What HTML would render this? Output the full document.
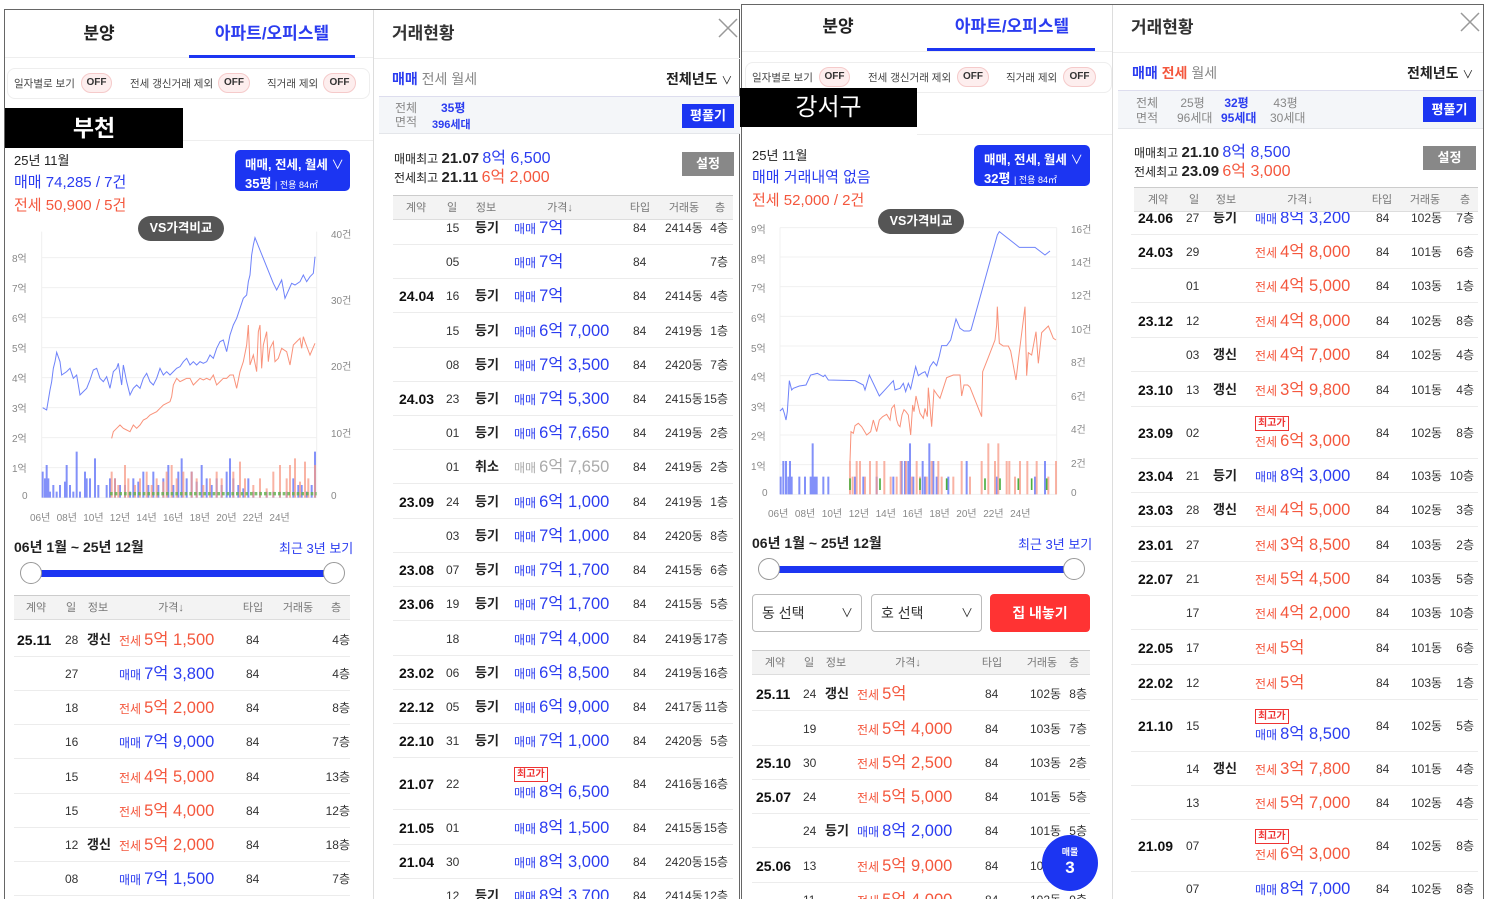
<!DOCTYPE html>
<html style="overflow:hidden"><head><meta charset="utf-8"><style>
*{margin:0;padding:0;box-sizing:border-box}
html,body{width:1488px;height:899px;overflow:hidden}
body{background:#fff;font-family:"Liberation Sans","Noto Sans CJK KR",sans-serif;color:#222;position:relative}
.a{position:absolute;white-space:nowrap}
.tab{font-size:17px;font-weight:bold;transform:translateX(-50%)}
.blue{color:#2b3cf0}.red{color:#f4573d}.gray{color:#888}
.pill{position:absolute;height:20px;border-radius:10px;background:#fdeeee;border:1px solid #f5caca;font-size:10px;color:#333;text-align:center;line-height:18px;font-weight:bold}
.ft{font-size:10.5px;color:#444}
.bb{position:absolute;background:#000;color:#fff;font-size:23px;font-weight:bold;text-align:center}
.btn{position:absolute;background:#1c35f2;border-radius:5px;color:#fff;font-weight:bold}
.vs{position:absolute;background:#555;color:#fff;border-radius:13px;font-size:12.5px;text-align:center;line-height:25px;font-weight:bold;z-index:3}
.ax{position:absolute;font-size:10px;color:#888;white-space:nowrap}
.hd{position:absolute;height:25px;background:#f3f3f3;border-top:1px solid #ccc;border-bottom:1px solid #ddd;z-index:2}
.hd span{position:absolute;top:0;line-height:24px;font-size:11px;color:#777;transform:translateX(-50%)}
.tb{position:absolute}
.r{position:absolute;left:0;right:0;height:34px;border-bottom:1px solid #ececec}
.r span{position:absolute;top:0;line-height:34px;white-space:nowrap}
.d{font-weight:bold;font-size:14px;color:#111}
.dy{font-size:12px;color:#333}
.inf{font-weight:bold;font-size:13px;color:#222}
.p{font-size:16.5px}
.p small{font-size:12px;margin-right:3px}
.pb{color:#2b3cf0}.pr{color:#f4573d}.pg{color:#aaa}
.ty{font-size:12px;color:#333}
.dn{font-size:12px;color:#333}
.fl{font-size:12px;color:#333;right:0}
.r.tall{height:52px}
.r.tall span{line-height:52px}
.r.tall span.p{line-height:18px;top:25px}
.r span.badge,.r.tall span.badge{top:9px;font-size:10px;font-weight:bold;color:#e33;border:1px solid #e33;padding:0 2px;line-height:13px;background:#fff}
.t1 .d{left:3px}.t1 .dy{left:51px}.t1 .inf{left:73px}.t1 .p,.t1 .badge{left:105px}.t1 .ty{left:232px}.t1 .dn{left:270px}
.t2 .d{left:6px}.t2 .dy{left:53px}.t2 .inf{left:82px}.t2 .p,.t2 .badge{left:121px}.t2 .ty{left:240px}.t2 .dn{left:272px}.t2 .fl{right:5px}
.t3 .d{left:4px}.t3 .dy{left:51px}.t3 .inf{left:73px}.t3 .p,.t3 .badge{left:105px}.t3 .ty{left:233px}.t3 .dn{left:278px}.t3 .fl{right:3px}
.t4 .d{left:7px}.t4 .dy{left:55px}.t4 .inf{left:82px}.t4 .p,.t4 .badge{left:124px}.t4 .ty{left:245px}.t4 .dn{left:280px}.t4 .fl{right:4px}
.sel{position:absolute;border:1px solid #bbb;border-radius:4px;font-size:14px;padding-left:9px;line-height:36px;color:#333}
</style></head><body>

<div class="a" style="left:4px;top:9px;width:736px;height:890px;border:1px solid #666;border-bottom:none"></div>
<div class="a" style="left:373px;top:10px;width:1px;height:889px;background:#ddd"></div>
<div class="a" style="left:741px;top:4px;width:743px;height:895px;border:1px solid #666;border-bottom:none"></div>
<div class="a" style="left:1112px;top:5px;width:1px;height:894px;background:#ddd"></div>

<!-- PANEL 1 -->
<div class="a tab" style="left:99px;top:19px">분양</div>
<div class="a tab blue" style="left:272px;top:19px;font-weight:600">아파트/오피스텔</div>
<div class="a" style="left:5px;top:57px;width:368px;height:1px;background:#eee"></div>
<div class="a" style="left:189px;top:55px;width:166px;height:3px;background:#1c35f2"></div>
<div class="a" style="left:7px;top:68px;width:363px;height:31px;border:1px solid #eee;border-radius:8px"></div>
<div class="a ft" style="left:14px;top:76px">일자별로 보기</div><div class="pill" style="left:81px;top:73px;width:31px">OFF</div>
<div class="a ft" style="left:130px;top:76px">전세 갱신거래 제외</div><div class="pill" style="left:218px;top:73px;width:32px">OFF</div>
<div class="a ft" style="left:267px;top:76px">직거래 제외</div><div class="pill" style="left:323px;top:73px;width:33px">OFF</div>
<div class="bb" style="left:5px;top:108px;width:178px;height:40px;line-height:40px">부천</div>
<div class="a" style="left:183px;top:140px;width:190px;height:1px;background:#eee"></div>
<div class="a" style="left:14px;top:150px;font-size:13px">25년 11월</div>
<div class="a blue" style="left:14px;top:171px;font-size:15px">매매 74,285 / 7건</div>
<div class="a red" style="left:14px;top:194px;font-size:15px">전세 50,900 / 5건</div>
<div class="btn" style="left:235px;top:150px;width:115px;height:41px"><div class="a" style="left:10px;top:4px;font-size:12.5px">매매, 전세, 월세 <span style="font-weight:normal">∨</span></div><div class="a" style="left:10px;top:23px;font-size:13px">35평 <span style="font-size:9px;font-weight:normal">| 전용 84㎡</span></div></div>
<div class="vs" style="left:138px;top:216px;width:86px;height:25px">VS가격비교</div>
<div class="ax" style="left:12px;top:250px">8억</div><div class="ax" style="left:12px;top:280px">7억</div><div class="ax" style="left:12px;top:310px">6억</div><div class="ax" style="left:12px;top:340px">5억</div><div class="ax" style="left:12px;top:370px">4억</div><div class="ax" style="left:12px;top:400px">3억</div><div class="ax" style="left:12px;top:430px">2억</div><div class="ax" style="left:12px;top:460px">1억</div><div class="ax" style="left:22px;top:491px">0</div>
<div class="ax" style="left:331px;top:226px">40건</div><div class="ax" style="left:331px;top:292px">30건</div><div class="ax" style="left:331px;top:358px">20건</div><div class="ax" style="left:331px;top:425px">10건</div><div class="ax" style="left:331px;top:491px">0</div>
<div class="ax" style="left:30px;top:509px;word-spacing:3.5px">06년 08년 10년 12년 14년 16년 18년 20년 22년 24년</div>
<div class="a" style="left:14px;top:537px;font-size:14px;font-weight:bold">06년 1월 ~ 25년 12월</div>
<div class="a blue" style="left:279px;top:538px;font-size:13px">최근 3년 보기</div>
<div class="a" style="left:30px;top:570px;width:304px;height:7px;background:#1c35f2"></div>
<div class="a" style="left:20px;top:562px;width:22px;height:22px;border-radius:50%;background:#fff;border:1px solid #999"></div>
<div class="a" style="left:323px;top:562px;width:22px;height:22px;border-radius:50%;background:#fff;border:1px solid #999"></div>
<div class="hd" style="left:14px;top:595px;width:336px"><span style="left:22px">계약</span><span style="left:57px">일</span><span style="left:84px">정보</span><span style="left:157px">가격↓</span><span style="left:239px">타입</span><span style="left:284px">거래동</span><span style="left:322px">층</span></div>
<div class="a" style="left:14px;top:620px;width:336px;height:279px;overflow:hidden">
<div class="tb t1" style="left:0;top:-620px;width:336px;height:1000px">
<div class="r" style="top:623px"><span class="d">25.11</span><span class="dy">28</span><span class="inf">갱신</span><span class="p pr"><small>전세</small>5억 1,500</span><span class="ty">84</span><span class="fl">4층</span></div>
<div class="r" style="top:657px"><span class="dy">27</span><span class="p pb"><small>매매</small>7억 3,800</span><span class="ty">84</span><span class="fl">4층</span></div>
<div class="r" style="top:691px"><span class="dy">18</span><span class="p pr"><small>전세</small>5억 2,000</span><span class="ty">84</span><span class="fl">8층</span></div>
<div class="r" style="top:725px"><span class="dy">16</span><span class="p pb"><small>매매</small>7억 9,000</span><span class="ty">84</span><span class="fl">7층</span></div>
<div class="r" style="top:760px"><span class="dy">15</span><span class="p pr"><small>전세</small>4억 5,000</span><span class="ty">84</span><span class="fl">13층</span></div>
<div class="r" style="top:794px"><span class="dy">15</span><span class="p pr"><small>전세</small>5억 4,000</span><span class="ty">84</span><span class="fl">12층</span></div>
<div class="r" style="top:828px"><span class="dy">12</span><span class="inf">갱신</span><span class="p pr"><small>전세</small>5억 2,000</span><span class="ty">84</span><span class="fl">18층</span></div>
<div class="r" style="top:862px"><span class="dy">08</span><span class="p pb"><small>매매</small>7억 1,500</span><span class="ty">84</span><span class="fl">7층</span></div>
</div></div>

<!-- PANEL 2 -->
<div class="a" style="left:392px;top:19px;font-size:17px;font-weight:bold;color:#333">거래현황</div>
<div class="a" style="left:718px;top:18px;width:20px;height:20px"><svg width="20" height="20"><path d="M1 1L19 19M19 1L1 19" stroke="#999" stroke-width="1.5"/></svg></div>
<div class="a" style="left:374px;top:58px;width:366px;height:1px;background:#eee"></div>
<div class="a" style="left:392px;top:69px;font-size:14px"><span class="blue" style="font-weight:bold">매매</span> <span class="gray">전세</span> <span class="gray">월세</span></div>
<div class="a" style="left:666px;top:69px;font-size:14px;font-weight:bold">전체년도 <span style="font-weight:normal;font-size:11px">∨</span></div>
<div class="a" style="left:379px;top:96px;width:361px;height:38px;background:#f4f6f9;border-top:1px solid #dde;border-bottom:1px solid #e4e6ea"></div>
<div class="a gray" style="left:395px;top:101px;font-size:12px;line-height:14px">전체<br>면적</div>
<div class="a blue" style="left:441px;top:101px;font-size:12px;line-height:14px;font-weight:bold">35평</div>
<div class="a blue" style="left:432px;top:116px;font-size:11px;font-weight:bold">396세대</div>
<div class="a" style="left:682px;top:104px;width:52px;height:24px;background:#1c35f2;color:#fff;font-size:13px;font-weight:bold;text-align:center;line-height:24px">평풀기</div>
<div class="a" style="left:394px;top:144px;font-size:12px">매매최고 <b style="font-size:15px">21.07</b> <span class="blue" style="font-size:16px">8억 6,500</span></div>
<div class="a" style="left:394px;top:163px;font-size:12px">전세최고 <b style="font-size:15px">21.11</b> <span class="red" style="font-size:16px">6억 2,000</span></div>
<div class="a" style="left:682px;top:152px;width:52px;height:24px;background:#888;color:#fff;font-size:13px;font-weight:bold;text-align:center;line-height:24px">설정</div>
<div class="hd" style="left:393px;top:195px;width:340px"><span style="left:23px">계약</span><span style="left:59px">일</span><span style="left:93px">정보</span><span style="left:167px">가격↓</span><span style="left:247px">타입</span><span style="left:291px">거래동</span><span style="left:327px">층</span></div>
<div class="a" style="left:380px;top:220px;width:360px;height:679px;overflow:hidden">
<div class="tb t2" style="left:13px;top:-220px;width:340px;height:1200px">
<div class="r" style="top:211px"><span class="dy">15</span><span class="inf">등기</span><span class="p pb"><small>매매</small>7억</span><span class="ty">84</span><span class="dn">2414동</span><span class="fl">4층</span></div>
<div class="r" style="top:245px"><span class="dy">05</span><span class="p pb"><small>매매</small>7억</span><span class="ty">84</span><span class="fl">7층</span></div>
<div class="r" style="top:279px"><span class="d">24.04</span><span class="dy">16</span><span class="inf">등기</span><span class="p pb"><small>매매</small>7억</span><span class="ty">84</span><span class="dn">2414동</span><span class="fl">4층</span></div>
<div class="r" style="top:314px"><span class="dy">15</span><span class="inf">등기</span><span class="p pb"><small>매매</small>6억 7,000</span><span class="ty">84</span><span class="dn">2419동</span><span class="fl">1층</span></div>
<div class="r" style="top:348px"><span class="dy">08</span><span class="inf">등기</span><span class="p pb"><small>매매</small>7억 3,500</span><span class="ty">84</span><span class="dn">2420동</span><span class="fl">7층</span></div>
<div class="r" style="top:382px"><span class="d">24.03</span><span class="dy">23</span><span class="inf">등기</span><span class="p pb"><small>매매</small>7억 5,300</span><span class="ty">84</span><span class="dn">2415동</span><span class="fl">15층</span></div>
<div class="r" style="top:416px"><span class="dy">01</span><span class="inf">등기</span><span class="p pb"><small>매매</small>6억 7,650</span><span class="ty">84</span><span class="dn">2419동</span><span class="fl">2층</span></div>
<div class="r" style="top:450px"><span class="dy">01</span><span class="inf">취소</span><span class="p pg"><small>매매</small>6억 7,650</span><span class="ty">84</span><span class="dn">2419동</span><span class="fl">2층</span></div>
<div class="r" style="top:485px"><span class="d">23.09</span><span class="dy">24</span><span class="inf">등기</span><span class="p pb"><small>매매</small>6억 1,000</span><span class="ty">84</span><span class="dn">2419동</span><span class="fl">1층</span></div>
<div class="r" style="top:519px"><span class="dy">03</span><span class="inf">등기</span><span class="p pb"><small>매매</small>7억 1,000</span><span class="ty">84</span><span class="dn">2420동</span><span class="fl">8층</span></div>
<div class="r" style="top:553px"><span class="d">23.08</span><span class="dy">07</span><span class="inf">등기</span><span class="p pb"><small>매매</small>7억 1,700</span><span class="ty">84</span><span class="dn">2415동</span><span class="fl">6층</span></div>
<div class="r" style="top:587px"><span class="d">23.06</span><span class="dy">19</span><span class="inf">등기</span><span class="p pb"><small>매매</small>7억 1,700</span><span class="ty">84</span><span class="dn">2415동</span><span class="fl">5층</span></div>
<div class="r" style="top:622px"><span class="dy">18</span><span class="p pb"><small>매매</small>7억 4,000</span><span class="ty">84</span><span class="dn">2419동</span><span class="fl">17층</span></div>
<div class="r" style="top:656px"><span class="d">23.02</span><span class="dy">06</span><span class="inf">등기</span><span class="p pb"><small>매매</small>6억 8,500</span><span class="ty">84</span><span class="dn">2419동</span><span class="fl">16층</span></div>
<div class="r" style="top:690px"><span class="d">22.12</span><span class="dy">05</span><span class="inf">등기</span><span class="p pb"><small>매매</small>6억 9,000</span><span class="ty">84</span><span class="dn">2417동</span><span class="fl">11층</span></div>
<div class="r" style="top:724px"><span class="d">22.10</span><span class="dy">31</span><span class="inf">등기</span><span class="p pb"><small>매매</small>7억 1,000</span><span class="ty">84</span><span class="dn">2420동</span><span class="fl">5층</span></div>
<div class="r tall" style="top:758px"><span class="d">21.07</span><span class="dy">22</span><span class="badge">최고가</span><span class="p pb"><small>매매</small>8억 6,500</span><span class="ty">84</span><span class="dn">2416동</span><span class="fl">16층</span></div>
<div class="r" style="top:811px"><span class="d">21.05</span><span class="dy">01</span><span class="p pb"><small>매매</small>8억 1,500</span><span class="ty">84</span><span class="dn">2415동</span><span class="fl">15층</span></div>
<div class="r" style="top:845px"><span class="d">21.04</span><span class="dy">30</span><span class="p pb"><small>매매</small>8억 3,000</span><span class="ty">84</span><span class="dn">2420동</span><span class="fl">15층</span></div>
<div class="r" style="top:879px"><span class="dy">12</span><span class="inf">등기</span><span class="p pb"><small>매매</small>8억 3,700</span><span class="ty">84</span><span class="dn">2414동</span><span class="fl">12층</span></div>
</div></div>

<!-- PANEL 3 -->
<div class="a tab" style="left:838px;top:12px">분양</div>
<div class="a tab blue" style="left:1012px;top:12px;font-weight:600">아파트/오피스텔</div>
<div class="a" style="left:742px;top:51px;width:370px;height:1px;background:#eee"></div>
<div class="a" style="left:927px;top:48px;width:168px;height:3px;background:#1c35f2"></div>
<div class="a" style="left:745px;top:62px;width:367px;height:31px;border:1px solid #eee;border-radius:8px"></div>
<div class="a ft" style="left:752px;top:70px">일자별로 보기</div><div class="pill" style="left:819px;top:67px;width:31px">OFF</div>
<div class="a ft" style="left:868px;top:70px">전세 갱신거래 제외</div><div class="pill" style="left:957px;top:67px;width:32px">OFF</div>
<div class="a ft" style="left:1006px;top:70px">직거래 제외</div><div class="pill" style="left:1063px;top:67px;width:33px">OFF</div>
<div class="bb" style="left:740px;top:88px;width:177px;height:39px;line-height:39px;font-weight:normal;font-size:24px">강서구</div>
<div class="a" style="left:917px;top:134px;width:195px;height:1px;background:#eee"></div>
<div class="a" style="left:752px;top:145px;font-size:13px">25년 11월</div>
<div class="a blue" style="left:752px;top:166px;font-size:15px">매매 거래내역 없음</div>
<div class="a red" style="left:752px;top:189px;font-size:15px">전세 52,000 / 2건</div>
<div class="btn" style="left:974px;top:145px;width:116px;height:41px"><div class="a" style="left:10px;top:4px;font-size:12.5px">매매, 전세, 월세 <span style="font-weight:normal">∨</span></div><div class="a" style="left:10px;top:23px;font-size:13px">32평 <span style="font-size:9px;font-weight:normal">| 전용 84㎡</span></div></div>
<div class="vs" style="left:878px;top:209px;width:86px;height:25px">VS가격비교</div>
<div class="ax" style="left:751px;top:221px">9억</div><div class="ax" style="left:751px;top:251px">8억</div><div class="ax" style="left:751px;top:280px">7억</div><div class="ax" style="left:751px;top:310px">6억</div><div class="ax" style="left:751px;top:340px">5억</div><div class="ax" style="left:751px;top:369px">4억</div><div class="ax" style="left:751px;top:399px">3억</div><div class="ax" style="left:751px;top:428px">2억</div><div class="ax" style="left:751px;top:458px">1억</div><div class="ax" style="left:762px;top:488px">0</div>
<div class="ax" style="left:1071px;top:221px">16건</div><div class="ax" style="left:1071px;top:254px">14건</div><div class="ax" style="left:1071px;top:287px">12건</div><div class="ax" style="left:1071px;top:321px">10건</div><div class="ax" style="left:1071px;top:354px">8건</div><div class="ax" style="left:1071px;top:388px">6건</div><div class="ax" style="left:1071px;top:421px">4건</div><div class="ax" style="left:1071px;top:455px">2건</div><div class="ax" style="left:1071px;top:488px">0</div>
<div class="ax" style="left:768px;top:505px;word-spacing:3.8px">06년 08년 10년 12년 14년 16년 18년 20년 22년 24년</div>
<div class="a" style="left:752px;top:533px;font-size:14px;font-weight:bold">06년 1월 ~ 25년 12월</div>
<div class="a blue" style="left:1018px;top:534px;font-size:13px">최근 3년 보기</div>
<div class="a" style="left:768px;top:566px;width:306px;height:7px;background:#1c35f2"></div>
<div class="a" style="left:758px;top:558px;width:22px;height:22px;border-radius:50%;background:#fff;border:1px solid #999"></div>
<div class="a" style="left:1063px;top:558px;width:22px;height:22px;border-radius:50%;background:#fff;border:1px solid #999"></div>
<div class="sel" style="left:752px;top:594px;width:110px;height:38px">동 선택<span style="position:absolute;right:8px;top:0;font-size:12px">∨</span></div>
<div class="sel" style="left:871px;top:594px;width:111px;height:38px">호 선택<span style="position:absolute;right:8px;top:0;font-size:12px">∨</span></div>
<div class="a" style="left:990px;top:594px;width:100px;height:38px;background:#f33;border-radius:4px;color:#fff;font-weight:bold;font-size:14px;text-align:center;line-height:38px">집 내놓기</div>
<div class="hd" style="left:752px;top:650px;width:338px"><span style="left:23px">계약</span><span style="left:57px">일</span><span style="left:84px">정보</span><span style="left:156px">가격↓</span><span style="left:240px">타입</span><span style="left:290px">거래동</span><span style="left:322px">층</span></div>
<div class="a" style="left:752px;top:675px;width:338px;height:224px;overflow:hidden">
<div class="tb t3" style="left:0;top:-675px;width:338px;height:1000px">
<div class="r" style="top:677px"><span class="d">25.11</span><span class="dy">24</span><span class="inf">갱신</span><span class="p pr"><small>전세</small>5억</span><span class="ty">84</span><span class="dn">102동</span><span class="fl">8층</span></div>
<div class="r" style="top:712px"><span class="dy">19</span><span class="p pr"><small>전세</small>5억 4,000</span><span class="ty">84</span><span class="dn">103동</span><span class="fl">7층</span></div>
<div class="r" style="top:746px"><span class="d">25.10</span><span class="dy">30</span><span class="p pr"><small>전세</small>5억 2,500</span><span class="ty">84</span><span class="dn">103동</span><span class="fl">2층</span></div>
<div class="r" style="top:780px"><span class="d">25.07</span><span class="dy">24</span><span class="p pr"><small>전세</small>5억 5,000</span><span class="ty">84</span><span class="dn">101동</span><span class="fl">5층</span></div>
<div class="r" style="top:814px"><span class="dy">24</span><span class="inf">등기</span><span class="p pb"><small>매매</small>8억 2,000</span><span class="ty">84</span><span class="dn">101동</span><span class="fl">5층</span></div>
<div class="r" style="top:849px"><span class="d">25.06</span><span class="dy">13</span><span class="p pr"><small>전세</small>5억 9,000</span><span class="ty">84</span><span class="dn">103동</span><span class="fl">8층</span></div>
<div class="r" style="top:883px"><span class="dy">11</span><span class="p pr"><small>전세</small>5억 4,000</span><span class="ty">84</span><span class="dn">102동</span><span class="fl">9층</span></div>
</div></div>
<div class="a" style="left:1042px;top:835px;width:56px;height:56px;border-radius:50%;background:#1c35f2;color:#fff;text-align:center;z-index:4"><div style="font-size:9px;font-weight:bold;margin-top:10px">매물</div><div style="font-size:17px;font-weight:bold;line-height:20px">3</div></div>

<!-- PANEL 4 -->
<div class="a" style="left:1131px;top:13px;font-size:17px;font-weight:bold;color:#333">거래현황</div>
<div class="a" style="left:1460px;top:12px;width:20px;height:20px"><svg width="20" height="20"><path d="M1 1L19 19M19 1L1 19" stroke="#999" stroke-width="1.5"/></svg></div>
<div class="a" style="left:1113px;top:52px;width:370px;height:1px;background:#eee"></div>
<div class="a" style="left:1132px;top:63px;font-size:14px"><span class="blue" style="font-weight:bold">매매</span> <span class="red" style="font-weight:bold">전세</span> <span class="gray">월세</span></div>
<div class="a" style="left:1407px;top:63px;font-size:14px;font-weight:bold">전체년도 <span style="font-weight:normal;font-size:11px">∨</span></div>
<div class="a" style="left:1118px;top:90px;width:365px;height:39px;background:#f4f6f9;border-top:1px solid #dde;border-bottom:1px solid #e4e6ea"></div>
<div class="a gray" style="left:1136px;top:96px;font-size:12px;line-height:15px">전체<br>면적</div>
<div class="a gray" style="left:1177px;top:96px;font-size:12px;line-height:15px">&nbsp;25평<br>96세대</div>
<div class="a blue" style="left:1221px;top:96px;font-size:12px;line-height:15px;font-weight:bold">&nbsp;32평<br>95세대</div>
<div class="a gray" style="left:1270px;top:96px;font-size:12px;line-height:15px">&nbsp;43평<br>30세대</div>
<div class="a" style="left:1423px;top:97px;width:53px;height:25px;background:#1c35f2;color:#fff;font-size:13px;font-weight:bold;text-align:center;line-height:25px">평풀기</div>
<div class="a" style="left:1134px;top:138px;font-size:12px">매매최고 <b style="font-size:15px">21.10</b> <span class="blue" style="font-size:16px">8억 8,500</span></div>
<div class="a" style="left:1134px;top:157px;font-size:12px">전세최고 <b style="font-size:15px">23.09</b> <span class="red" style="font-size:16px">6억 3,000</span></div>
<div class="a" style="left:1423px;top:146px;width:53px;height:24px;background:#888;color:#fff;font-size:13px;font-weight:bold;text-align:center;line-height:24px">설정</div>
<div class="hd" style="left:1134px;top:187px;width:344px"><span style="left:24px">계약</span><span style="left:60px">일</span><span style="left:92px">정보</span><span style="left:166px">가격↓</span><span style="left:248px">타입</span><span style="left:291px">거래동</span><span style="left:331px">층</span></div>
<div class="a" style="left:1120px;top:212px;width:364px;height:687px;overflow:hidden">
<div class="tb t4" style="left:11px;top:-212px;width:347px;height:1200px">
<div class="r" style="top:201px"><span class="d">24.06</span><span class="dy">27</span><span class="inf">등기</span><span class="p pb"><small>매매</small>8억 3,200</span><span class="ty">84</span><span class="dn">102동</span><span class="fl">7층</span></div>
<div class="r" style="top:235px"><span class="d">24.03</span><span class="dy">29</span><span class="p pr"><small>전세</small>4억 8,000</span><span class="ty">84</span><span class="dn">101동</span><span class="fl">6층</span></div>
<div class="r" style="top:269px"><span class="dy">01</span><span class="p pr"><small>전세</small>4억 5,000</span><span class="ty">84</span><span class="dn">103동</span><span class="fl">1층</span></div>
<div class="r" style="top:304px"><span class="d">23.12</span><span class="dy">12</span><span class="p pr"><small>전세</small>4억 8,000</span><span class="ty">84</span><span class="dn">102동</span><span class="fl">8층</span></div>
<div class="r" style="top:338px"><span class="dy">03</span><span class="inf">갱신</span><span class="p pr"><small>전세</small>4억 7,000</span><span class="ty">84</span><span class="dn">102동</span><span class="fl">4층</span></div>
<div class="r" style="top:373px"><span class="d">23.10</span><span class="dy">13</span><span class="inf">갱신</span><span class="p pr"><small>전세</small>3억 9,800</span><span class="ty">84</span><span class="dn">101동</span><span class="fl">4층</span></div>
<div class="r tall" style="top:407px"><span class="d">23.09</span><span class="dy">02</span><span class="badge">최고가</span><span class="p pr"><small>전세</small>6억 3,000</span><span class="ty">84</span><span class="dn">102동</span><span class="fl">8층</span></div>
<div class="r" style="top:459px"><span class="d">23.04</span><span class="dy">21</span><span class="inf">등기</span><span class="p pb"><small>매매</small>8억 3,000</span><span class="ty">84</span><span class="dn">103동</span><span class="fl">10층</span></div>
<div class="r" style="top:493px"><span class="d">23.03</span><span class="dy">28</span><span class="inf">갱신</span><span class="p pr"><small>전세</small>4억 5,000</span><span class="ty">84</span><span class="dn">102동</span><span class="fl">3층</span></div>
<div class="r" style="top:528px"><span class="d">23.01</span><span class="dy">27</span><span class="p pr"><small>전세</small>3억 8,500</span><span class="ty">84</span><span class="dn">103동</span><span class="fl">2층</span></div>
<div class="r" style="top:562px"><span class="d">22.07</span><span class="dy">21</span><span class="p pr"><small>전세</small>5억 4,500</span><span class="ty">84</span><span class="dn">103동</span><span class="fl">5층</span></div>
<div class="r" style="top:596px"><span class="dy">17</span><span class="p pr"><small>전세</small>4억 2,000</span><span class="ty">84</span><span class="dn">103동</span><span class="fl">10층</span></div>
<div class="r" style="top:631px"><span class="d">22.05</span><span class="dy">17</span><span class="p pr"><small>전세</small>5억</span><span class="ty">84</span><span class="dn">101동</span><span class="fl">6층</span></div>
<div class="r" style="top:666px"><span class="d">22.02</span><span class="dy">12</span><span class="p pr"><small>전세</small>5억</span><span class="ty">84</span><span class="dn">103동</span><span class="fl">1층</span></div>
<div class="r tall" style="top:700px"><span class="d">21.10</span><span class="dy">15</span><span class="badge">최고가</span><span class="p pb"><small>매매</small>8억 8,500</span><span class="ty">84</span><span class="dn">102동</span><span class="fl">5층</span></div>
<div class="r" style="top:752px"><span class="dy">14</span><span class="inf">갱신</span><span class="p pr"><small>전세</small>3억 7,800</span><span class="ty">84</span><span class="dn">101동</span><span class="fl">4층</span></div>
<div class="r" style="top:786px"><span class="dy">13</span><span class="p pr"><small>전세</small>5억 7,000</span><span class="ty">84</span><span class="dn">102동</span><span class="fl">4층</span></div>
<div class="r tall" style="top:820px"><span class="d">21.09</span><span class="dy">07</span><span class="badge">최고가</span><span class="p pr"><small>전세</small>6억 3,000</span><span class="ty">84</span><span class="dn">102동</span><span class="fl">8층</span></div>
<div class="r" style="top:872px"><span class="dy">07</span><span class="p pb"><small>매매</small>8억 7,000</span><span class="ty">84</span><span class="dn">102동</span><span class="fl">8층</span></div>
</div></div>

<!-- CHARTS -->
<svg class="a" style="left:0;top:0;z-index:1" width="1488" height="899">
<g transform="translate(0,215) scale(0.33333)" fill="none">
 <g stroke="#f0f0f0" stroke-width="3"><path d="M125 128H950M125 218H950M125 308H950M125 398H950M125 488H950M125 578H950M125 668H950M125 758H950M125 848H950M125 50V848M950 50V848"/></g>
 <g stroke="#5a6cf7" stroke-width="6" opacity="0.75"><path d="M128 848V770M135 848V790M140 848V750M145 848V790M150 848V830M160 848V810M170 848V830M180 848V810M195 848V800M200 848V750M210 848V810M220 848V830M230 848V710M240 848V830M255 848V770M260 848V790M270 848V790M285 848V730M295 848V810M320 848V810M330 848V790M345 848V790M360 848V810M375 848V810M390 848V830M400 848V790M415 848V800M430 848V770M445 848V810M460 848V770M475 848V810M490 848V790M505 848V750M520 848V810M535 848V770M545 848V730M560 848V790M575 848V770M590 848V800M605 848V750M620 848V790M635 848V810M650 848V790M665 848V810M680 848V770M690 848V730M700 848V790M715 848V810M730 848V820M745 848V790M760 848V830M780 848V830M800 848V830M820 848V830M840 848V830M860 848V830M880 848V790M895 848V810M905 848V810M920 848V830M935 848V810M945 848V710"/></g>
 <g stroke="#f79a85" stroke-width="6" opacity="0.75"><path d="M335 848V770M345 848V790M355 848V810M375 848V750M385 848V790M405 848V810M420 848V790M440 848V770M455 848V810M470 848V790M490 848V800M500 848V770M515 848V750M530 848V790M550 848V770M575 848V770M590 848V790M610 848V810M630 848V790M650 848V770M665 848V790M700 848V770M720 848V740M735 848V790M760 848V810M780 848V790M800 848V820M820 848V770M840 848V750M860 848V790M870 848V750M885 848V730M900 848V800M915 848V740M925 848V790M945 848V750"/></g>
 <path d="M330 836H950" stroke="#5fb04a" stroke-width="10" stroke-dasharray="8 6" opacity="0.8"/>
 <polyline stroke="#6e82fa" stroke-width="3" points="128,578 140,585 145,555 150,525 155,500 160,460 165,440 170,412 180,440 185,480 200,470 210,460 220,490 230,480 240,540 250,530 260,520 270,495 280,465 290,460 300,490 310,500 320,485 330,520 340,470 350,460 355,445 365,510 370,450 380,500 390,540 400,520 410,510 420,520 430,490 440,475 450,500 460,510 470,490 480,460 490,480 500,470 510,480 520,470 530,460 540,455 550,440 560,430 570,450 580,440 590,450 600,440 610,445 620,440 630,420 640,430 650,400 660,380 670,375 680,410 690,360 700,330 710,310 720,280 730,250 740,240 745,200 750,180 755,120 760,90 765,68 820,205 830,225 845,195 855,250 875,205 885,210 900,200 910,180 920,200 930,185 940,175 945,125"/>
 <polyline stroke="#f9927a" stroke-width="3" points="335,670 340,650 350,640 360,630 370,640 380,645 390,650 400,630 410,640 420,630 430,615 440,610 450,600 460,595 470,590 480,580 490,570 500,565 510,560 515,545 520,510 525,500 530,490 540,500 550,495 560,490 570,490 580,510 590,500 600,490 610,495 620,490 630,495 640,480 650,510 660,500 670,490 680,490 690,480 700,480 710,520 720,470 730,440 740,390 745,330 750,450 760,420 770,470 775,350 780,330 785,460 790,390 800,350 805,440 810,400 820,380 825,440 835,430 845,400 860,410 870,450 880,390 890,380 900,370 905,400 910,365 915,380 930,420 945,385"/>
</g>
<g transform="translate(740,205) scale(0.33333)" fill="none">
 <g stroke="#f0f0f0" stroke-width="3"><path d="M120 68H950M120 156H950M120 245H950M120 334H950M120 423H950M120 512H950M120 601H950M120 690H950M120 779H950M120 868H950M120 68V868M950 68V868"/></g>
 <g stroke="#5a6cf7" stroke-width="6" opacity="0.75"><path d="M122 868V815M130 868V768M138 868V768M145 868V815M150 868V768M155 868V815M178 868V815M195 868V815M212 868V815M218 868V715M224 868V815M230 868V815M250 868V815M265 868V815M345 868V815M370 868V815M410 868V815M460 868V815M485 868V768M495 868V768M505 868V768M510 868V715M520 868V815M548 868V768M555 868V815M568 868V715M580 868V768M590 868V815M625 868V815M680 868V768M770 868V815M885 868V815M915 868V768"/></g>
 <g stroke="#f79a85" stroke-width="6" opacity="0.75"><path d="M330 868V768M338 868V815M350 868V768M360 868V768M375 868V815M390 868V768M410 868V768M433 868V768M452 868V815M470 868V815M482 868V768M498 868V768M515 868V815M530 868V768M540 868V815M560 868V815M575 868V768M595 868V768M605 868V815M640 868V815M665 868V768M690 868V815M725 868V768M745 868V715M765 868V768M775 868V715M800 868V768M808 868V768M825 868V815M840 868V768M862 868V768M890 868V768M925 868V815M948 868V768"/></g>
 <path d="M330 855V820M420 855V820M540 855V820M620 855V820M735 855V820M780 855V820M835 855V820M875 855V820M920 855V820" stroke="#4caf40" stroke-width="5"/>
 <polyline stroke="#6e82fa" stroke-width="3" points="120,618 128,610 133,625 138,645 142,620 148,527 155,555 160,550 178,543 198,540 212,510 220,508 232,505 250,515 255,510 265,525 345,527 370,540 375,555 388,510 418,573 460,527 465,555 480,550 490,535 497,560 505,535 512,552 518,525 527,485 535,512 545,505 555,500 562,515 570,485 580,470 590,482 598,453 605,422 620,422 632,405 648,342 660,370 672,378 688,378 693,375 772,90 778,80 838,127 885,127 915,150 930,138"/>
 <polyline stroke="#f9927a" stroke-width="3" points="330,768 333,680 340,685 345,662 355,655 365,665 380,690 392,680 400,645 410,680 418,645 428,635 440,628 450,645 455,610 463,600 470,645 475,660 480,665 486,630 492,614 498,620 505,630 512,690 518,600 522,620 528,573 540,625 550,640 555,610 562,635 565,548 575,665 582,555 592,570 600,580 620,518 640,510 660,510 665,573 672,540 683,540 690,547 725,635 728,500 745,457 765,405 770,360 772,305 778,415 790,423 805,423 812,438 828,525 835,465 855,305 860,512 865,443 875,450 888,380 895,475 905,383 925,363 930,375 940,400 948,405"/>
</g>
</svg>
</body></html>
